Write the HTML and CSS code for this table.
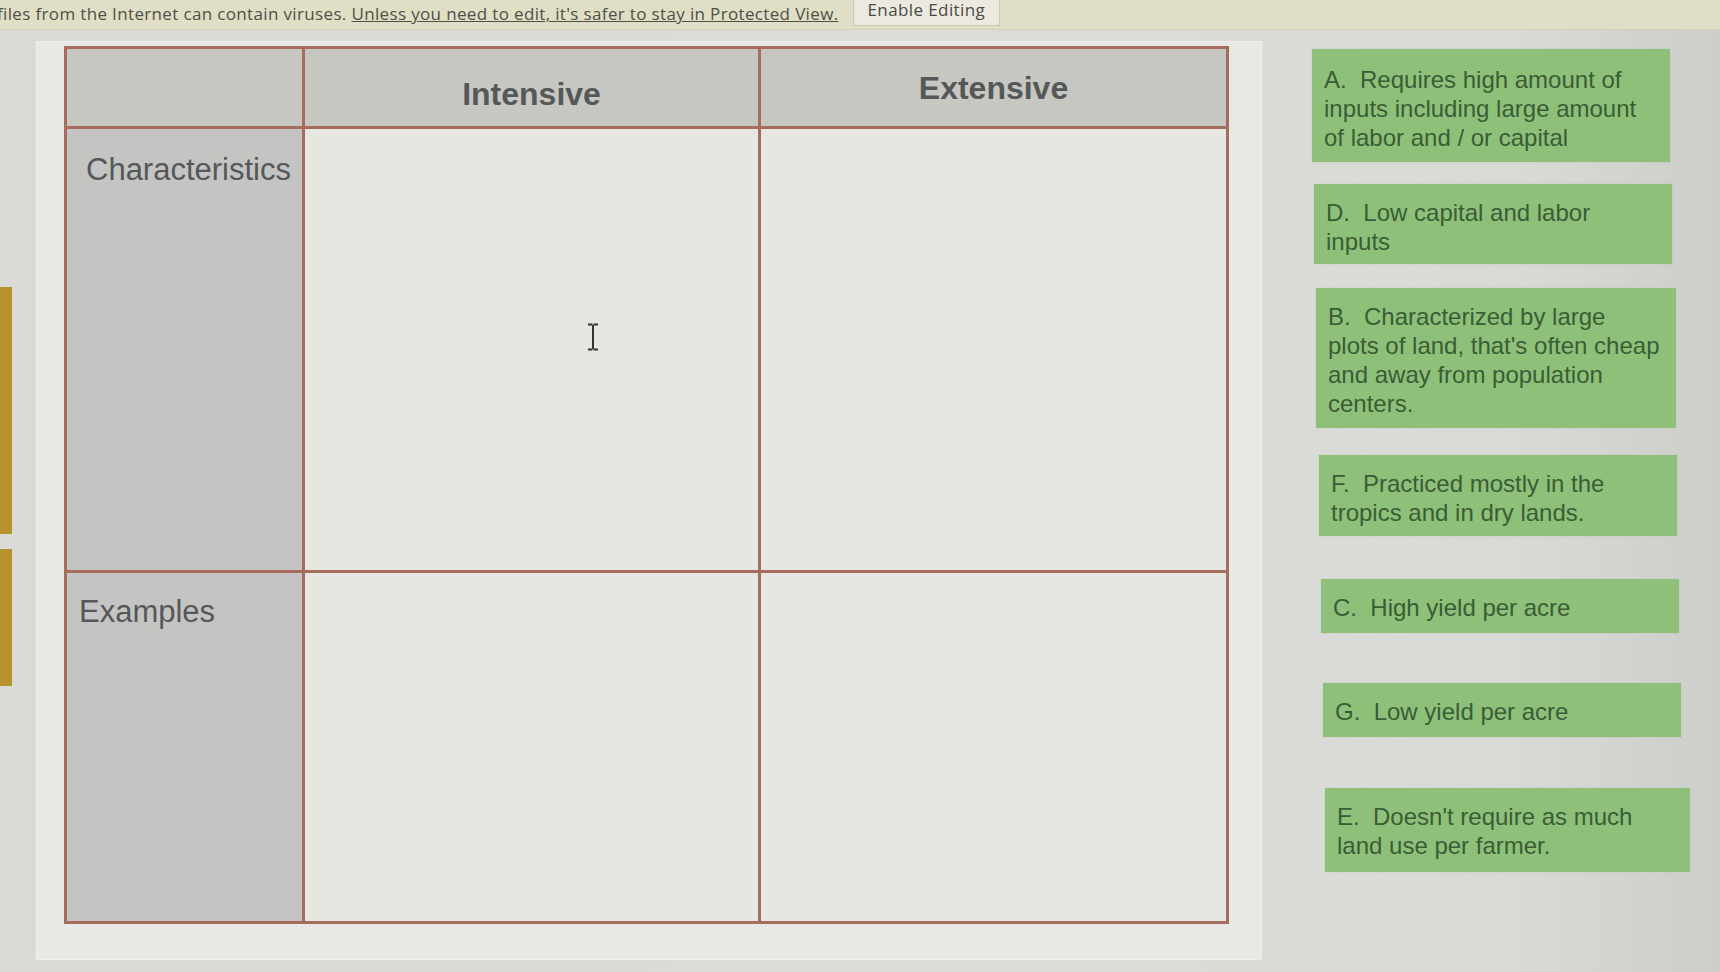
FILE: index.html
```html
<!DOCTYPE html>
<html lang="en">
<head>
<meta charset="utf-8">
<title>Intensive vs Extensive</title>
<link rel="stylesheet" href="styles.css">
</head>
<body>
<div class="topbar">
  <span class="msg">files from the Internet can contain viruses. <u>Unless you need to edit, it's safer to stay in Protected View.</u></span>
  <span class="enable">Enable Editing</span>
</div>
<div class="main">
  <div class="gutter">
    <div class="strip strip-a"></div>
    <div class="strip strip-b"></div>
  </div>
  <div class="slide">
    <div class="grid">
      <div class="cell head corner"></div>
      <div class="cell head head-int">Intensive</div>
      <div class="cell head head-ext">Extensive</div>
      <div class="cell label label-char">Characteristics</div>
      <div class="cell body cursor-cell">
        <svg class="ibeam" width="16" height="28" viewBox="0 0 16 28"><path d="M3 1.5h4.5M8.5 1.5H13M8 2v24M3 26.5h4.5M8.5 26.5H13" stroke="#333" stroke-width="2" fill="none"/></svg>
      </div>
      <div class="cell body"></div>
      <div class="cell label label-ex">Examples</div>
      <div class="cell body"></div>
      <div class="cell body"></div>
    </div>
  </div>
  <div class="cards">
    <div class="card card-a">A.&nbsp; Requires high amount of<br>inputs including large amount<br>of labor and / or capital</div>
    <div class="card card-d">D.&nbsp; Low capital and labor<br>inputs</div>
    <div class="card card-b">B.&nbsp; Characterized by large<br>plots of land, that's often cheap<br>and away from population<br>centers.</div>
    <div class="card card-f">F.&nbsp; Practiced mostly in the<br>tropics and in dry lands.</div>
    <div class="card card-c">C.&nbsp; High yield per acre</div>
    <div class="card card-g">G.&nbsp; Low yield per acre</div>
    <div class="card card-e">E.&nbsp; Doesn't require as much<br>land use per farmer.</div>
  </div>
</div>
</body>
</html>
```

FILE: styles.css
```css
* { box-sizing: border-box; }
html, body { margin: 0; padding: 0; }
body {
  width: 1720px;
  height: 972px;
  overflow: hidden;
  background: linear-gradient(90deg, #d9dad6 0%, #dcddd9 60%, #d9d9d6 88%, #cdcdca 100%);
  font-family: "Liberation Sans", Arial, sans-serif;
}
.topbar {
  height: 30px;
  background: #e1dec6;
  border-bottom: 1px solid #d2d0bb;
  display: flex;
  align-items: flex-start;
  font-family: "Open Sans", "Liberation Sans", sans-serif;
  font-size: 17px;
  color: #4f4f46;
}
.msg {
  margin-left: -3px;
  padding-top: 2px;
  white-space: nowrap;
  letter-spacing: 0.35px;
}
.enable {
  margin-left: 14px;
  height: 26px;
  padding: 0 14px;
  line-height: 20px;
  background: #eceae0;
  border: 1px solid #c9c7b8;
  border-top: none;
  color: #4a4a44;
  letter-spacing: 0.4px;
}
.main {
  display: flex;
  align-items: flex-start;
  height: 942px;
}
.gutter {
  width: 36px;
  flex: none;
  display: flex;
  flex-direction: column;
}
.strip {
  width: 12px;
  background: #b7912c;
}
.strip-a { margin-top: 257px; height: 247px; }
.strip-b { margin-top: 15px; height: 137px; }
.slide {
  width: 1226px;
  height: 919px;
  margin-top: 11px;
  flex: none;
  background: #e8e8e4;
  border: 1px solid #efefec;
  padding: 4px 0 0 27px;
}
.grid {
  width: 1165px;
  height: 878px;
  display: grid;
  grid-template-columns: 235px 453px 465px;
  grid-template-rows: 77px 441px 348px;
  gap: 3px;
  padding: 3px;
  background: #a66d5f;
}
.cell { min-width: 0; }
.head {
  background: #c7c7c1;
  display: flex;
  align-items: center;
  justify-content: center;
  font-weight: bold;
  font-size: 32px;
  color: #555858;
}
.head-int { padding-top: 14px; }
.head-ext { padding-top: 2px; }
.label {
  background: #c4c5c2;
  font-size: 31px;
  color: #555858;
  line-height: 36px;
  padding: 23px 10px 0 19px;
}
.label-ex { padding-left: 12px; padding-top: 21px; }
.body {
  background: #e7e7e2;
}
.cursor-cell { position: relative; }
.ibeam {
  position: absolute;
  left: 280px;
  top: 194px;
}
.cards {
  margin-left: 50px;
  margin-top: 19px;
  display: flex;
  flex-direction: column;
  align-items: flex-start;
}
.card {
  width: 358px;
  background: #8fc07a;
  color: #3a5d35;
  font-size: 24px;
  line-height: 29px;
  padding: 14px 8px 8px 12px;
  white-space: nowrap;
  box-shadow: 0 0 1px rgba(120,150,100,0.4);
}
.card-a { min-height: 113px; padding-top: 16px; }
.card-d { margin-top: 22px; min-height: 80px; margin-left: 2px; }
.card-b { margin-top: 24px; min-height: 140px; margin-left: 4px; width: 360px; }
.card-f { margin-top: 27px; min-height: 81px; margin-left: 7px; }
.card-c { margin-top: 43px; min-height: 54px; margin-left: 9px; }
.card-g { margin-top: 50px; min-height: 54px; margin-left: 11px; }
.card-e { margin-top: 51px; min-height: 84px; margin-left: 13px; width: 365px; }
```
